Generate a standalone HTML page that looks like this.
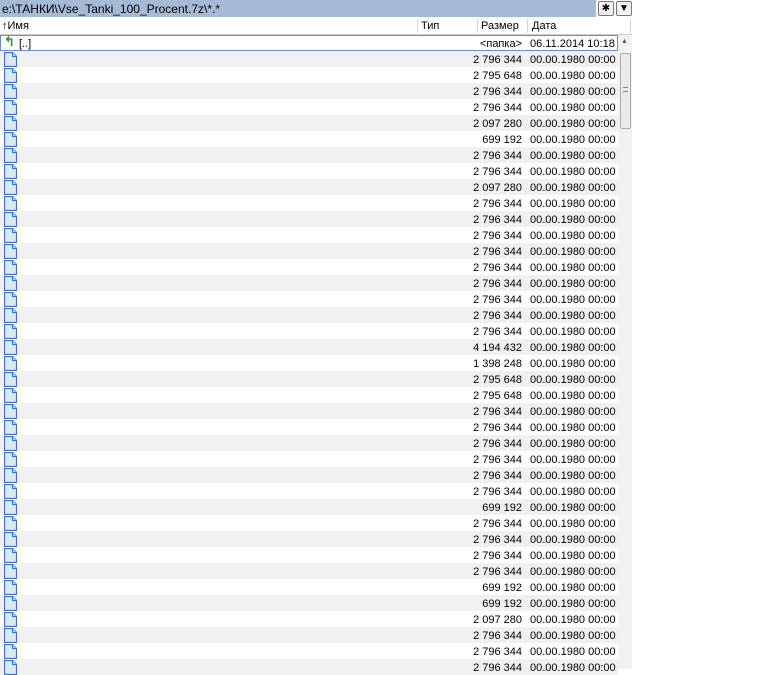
<!DOCTYPE html>
<html><head><meta charset="utf-8"><style>
*{margin:0;padding:0;box-sizing:border-box}
body{width:768px;height:669px;background:#fff;font-family:"Liberation Sans",Arial,sans-serif;font-size:11px;color:#000;position:relative;overflow:hidden}
.title{position:absolute;left:0;top:0;width:596px;height:17px;background:#a7bad5;padding:2px 0 0 2px;font-size:12px}
.btn{position:absolute;top:1px;width:16px;height:15px;border:1px solid #777;background:#f2f2f2;border-radius:2px;font-size:10px;text-align:center;line-height:13px}
.hdr{position:absolute;top:17px;left:0;width:632px;height:18px;border-bottom:1px solid #ccc;background:#fff}
.hdr span{position:absolute;top:3px}
.hdr i{position:absolute;top:2px;width:1px;height:14px;background:#d5d5d5}
.list{position:absolute;top:35px;left:0;width:618px}
.r{height:16px;position:relative;white-space:nowrap}
.r:nth-child(even){background:#f0f0f0}
.r .s{position:absolute;right:96px;top:3px}
.r .d{position:absolute;left:530px;top:3px}
.ic{position:absolute;left:4px;top:1px;width:13px;height:15px}
.sb{position:absolute;left:618px;top:35px;width:14px;height:634px;background:#f2f2f2;z-index:5}
.th{position:absolute;left:2px;top:18px;width:11px;height:76px;border:1px solid #aaa;border-radius:2px;background:#eaeaea}
</style></head><body>
<div class="title">e:\ТАНКИ\Vse_Tanki_100_Procent.7z\*.*</div>
<div class="btn" style="left:598px">✱</div>
<div class="btn" style="left:616px">▼</div>
<div class="hdr"><span style="left:2px">↑Имя</span><i style="left:417px"></i><span style="left:421px">Тип</span><i style="left:477px"></i><span style="left:481px">Размер</span><i style="left:527px"></i><span style="left:532px">Дата</span><i style="left:630px"></i></div>
<div class="sb"><div style="position:absolute;left:3px;top:3px;font-size:7px;color:#555">▲</div><div class="th"><div style="position:absolute;left:2px;top:33px;width:5px;height:5px;border-top:1px solid #888;border-bottom:1px solid #888"></div></div></div>
<svg width="0" height="0" style="position:absolute"><defs><symbol id="f" viewBox="0 0 13 15"><path d="M0.5 0.5H8.5L12.5 4.5V14.5H0.5Z" fill="#dde7f8" stroke="#3f6fc4" stroke-width="1.2"/><path d="M8.5 0.5V4.5H12.5" fill="#c5d5f0" stroke="#3f6fc4"/></symbol></defs></svg>
<div class="list">
<div class="r" style="background:#fff;outline:1px solid #6d8fc9;outline-offset:-1px"><span style="position:absolute;left:4px;top:-1px;color:#2a9a2a;font-weight:bold;font-size:13px">↰</span><span style="position:absolute;left:19px;top:3px">[..]</span><span class="s">&lt;папка&gt;</span><span class="d">06.11.2014 10:18</span></div>
<div class="r"><svg class="ic"><use href="#f"/></svg><span class="s">2 796 344</span><span class="d">00.00.1980 00:00</span></div>
<div class="r"><svg class="ic"><use href="#f"/></svg><span class="s">2 795 648</span><span class="d">00.00.1980 00:00</span></div>
<div class="r"><svg class="ic"><use href="#f"/></svg><span class="s">2 796 344</span><span class="d">00.00.1980 00:00</span></div>
<div class="r"><svg class="ic"><use href="#f"/></svg><span class="s">2 796 344</span><span class="d">00.00.1980 00:00</span></div>
<div class="r"><svg class="ic"><use href="#f"/></svg><span class="s">2 097 280</span><span class="d">00.00.1980 00:00</span></div>
<div class="r"><svg class="ic"><use href="#f"/></svg><span class="s">699 192</span><span class="d">00.00.1980 00:00</span></div>
<div class="r"><svg class="ic"><use href="#f"/></svg><span class="s">2 796 344</span><span class="d">00.00.1980 00:00</span></div>
<div class="r"><svg class="ic"><use href="#f"/></svg><span class="s">2 796 344</span><span class="d">00.00.1980 00:00</span></div>
<div class="r"><svg class="ic"><use href="#f"/></svg><span class="s">2 097 280</span><span class="d">00.00.1980 00:00</span></div>
<div class="r"><svg class="ic"><use href="#f"/></svg><span class="s">2 796 344</span><span class="d">00.00.1980 00:00</span></div>
<div class="r"><svg class="ic"><use href="#f"/></svg><span class="s">2 796 344</span><span class="d">00.00.1980 00:00</span></div>
<div class="r"><svg class="ic"><use href="#f"/></svg><span class="s">2 796 344</span><span class="d">00.00.1980 00:00</span></div>
<div class="r"><svg class="ic"><use href="#f"/></svg><span class="s">2 796 344</span><span class="d">00.00.1980 00:00</span></div>
<div class="r"><svg class="ic"><use href="#f"/></svg><span class="s">2 796 344</span><span class="d">00.00.1980 00:00</span></div>
<div class="r"><svg class="ic"><use href="#f"/></svg><span class="s">2 796 344</span><span class="d">00.00.1980 00:00</span></div>
<div class="r"><svg class="ic"><use href="#f"/></svg><span class="s">2 796 344</span><span class="d">00.00.1980 00:00</span></div>
<div class="r"><svg class="ic"><use href="#f"/></svg><span class="s">2 796 344</span><span class="d">00.00.1980 00:00</span></div>
<div class="r"><svg class="ic"><use href="#f"/></svg><span class="s">2 796 344</span><span class="d">00.00.1980 00:00</span></div>
<div class="r"><svg class="ic"><use href="#f"/></svg><span class="s">4 194 432</span><span class="d">00.00.1980 00:00</span></div>
<div class="r"><svg class="ic"><use href="#f"/></svg><span class="s">1 398 248</span><span class="d">00.00.1980 00:00</span></div>
<div class="r"><svg class="ic"><use href="#f"/></svg><span class="s">2 795 648</span><span class="d">00.00.1980 00:00</span></div>
<div class="r"><svg class="ic"><use href="#f"/></svg><span class="s">2 795 648</span><span class="d">00.00.1980 00:00</span></div>
<div class="r"><svg class="ic"><use href="#f"/></svg><span class="s">2 796 344</span><span class="d">00.00.1980 00:00</span></div>
<div class="r"><svg class="ic"><use href="#f"/></svg><span class="s">2 796 344</span><span class="d">00.00.1980 00:00</span></div>
<div class="r"><svg class="ic"><use href="#f"/></svg><span class="s">2 796 344</span><span class="d">00.00.1980 00:00</span></div>
<div class="r"><svg class="ic"><use href="#f"/></svg><span class="s">2 796 344</span><span class="d">00.00.1980 00:00</span></div>
<div class="r"><svg class="ic"><use href="#f"/></svg><span class="s">2 796 344</span><span class="d">00.00.1980 00:00</span></div>
<div class="r"><svg class="ic"><use href="#f"/></svg><span class="s">2 796 344</span><span class="d">00.00.1980 00:00</span></div>
<div class="r"><svg class="ic"><use href="#f"/></svg><span class="s">699 192</span><span class="d">00.00.1980 00:00</span></div>
<div class="r"><svg class="ic"><use href="#f"/></svg><span class="s">2 796 344</span><span class="d">00.00.1980 00:00</span></div>
<div class="r"><svg class="ic"><use href="#f"/></svg><span class="s">2 796 344</span><span class="d">00.00.1980 00:00</span></div>
<div class="r"><svg class="ic"><use href="#f"/></svg><span class="s">2 796 344</span><span class="d">00.00.1980 00:00</span></div>
<div class="r"><svg class="ic"><use href="#f"/></svg><span class="s">2 796 344</span><span class="d">00.00.1980 00:00</span></div>
<div class="r"><svg class="ic"><use href="#f"/></svg><span class="s">699 192</span><span class="d">00.00.1980 00:00</span></div>
<div class="r"><svg class="ic"><use href="#f"/></svg><span class="s">699 192</span><span class="d">00.00.1980 00:00</span></div>
<div class="r"><svg class="ic"><use href="#f"/></svg><span class="s">2 097 280</span><span class="d">00.00.1980 00:00</span></div>
<div class="r"><svg class="ic"><use href="#f"/></svg><span class="s">2 796 344</span><span class="d">00.00.1980 00:00</span></div>
<div class="r"><svg class="ic"><use href="#f"/></svg><span class="s">2 796 344</span><span class="d">00.00.1980 00:00</span></div>
<div class="r"><svg class="ic"><use href="#f"/></svg><span class="s">2 796 344</span><span class="d">00.00.1980 00:00</span></div>
</div>
</body></html>
